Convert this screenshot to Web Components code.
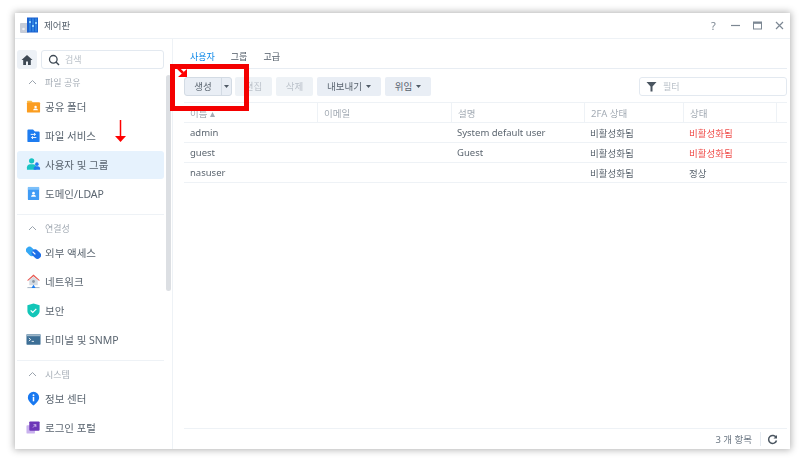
<!DOCTYPE html>
<html lang="ko">
<head>
<meta charset="utf-8">
<title>제어판</title>
<style>
  html, body { margin: 0; height: 100%; background: #fff; overflow: hidden; }
  body {
    font-family: "Noto Sans", "Noto Sans CJK KR", sans-serif;
    font-size: 10px;
    color: #4f5a66;
    padding: 13px 15px;
    box-sizing: border-box;
    width: 805px;
    height: 462px;
  }
</style>
</head>
<body>
<dsm-window>
  <dsm-sidebar slot="side">
    <side-group label="파일 공유">
      <side-item icon="folder">공유 폴더</side-item>
      <side-item icon="files">파일 서비스</side-item>
      <side-item icon="users" selected>사용자 및 그룹</side-item>
      <side-item icon="domain">도메인/LDAP</side-item>
    </side-group>
    <side-group label="연결성">
      <side-item icon="link">외부 액세스</side-item>
      <side-item icon="net">네트워크</side-item>
      <side-item icon="shield">보안</side-item>
      <side-item icon="term">터미널 및 SNMP</side-item>
    </side-group>
    <side-group label="시스템" last>
      <side-item icon="info">정보 센터</side-item>
      <side-item icon="portal">로그인 포털</side-item>
    </side-group>
  </dsm-sidebar>
  <user-panel slot="main"></user-panel>
</dsm-window>
<mark-up></mark-up>

<script>
const ICONS = {
  folder: `<path d="M1 3c0-.8.5-1.200 1.200-1.200h3.600l1.600 1.800H1z" fill="#f7bd45"/><rect x="1" y="3.500" width="14" height="11" rx="1" fill="#fb9d1f"/><circle cx="10.200" cy="8.400" r="1.300" fill="#fff"/><path d="M7.600 12c.2-1.600 1.200-2 2.600-2s2.400.4 2.600 2z" fill="#fff"/>`,
  files: `<path d="M1.500 2.600c0-.7.4-1 1-1h5l2 2h4c.7 0 1 .4 1 1v9.400c0 .7-.4 1-1 1h-11c-.6 0-1-.3-1-1z" fill="#1e7cf0"/><path d="M5 6.800h5M8.600 5.400l1.500 1.400-1.500 1.400M11 10.200H6M7.400 8.800L5.900 10.200l1.500 1.400" fill="none" stroke="#fff" stroke-width="1"/>`,
  users: `<circle cx="6" cy="4" r="2.800" fill="#19c4c4"/><path d="M1 13.500V11c0-2 1.400-3.400 3.400-3.400h3.200c2 0 3.400 1.400 3.400 3.400v2.500z" fill="#19c4c4"/><circle cx="11.600" cy="7.600" r="1.900" fill="#1e7cf0"/><path d="M8.200 13.500v-1.300c0-1.400 1-2.400 2.400-2.400h2c1.400 0 2.400 1 2.400 2.400v1.300z" fill="#1e7cf0"/>`,
  domain: `<rect x="2" y="1" width="12" height="14" rx="1" fill="#3f9bf5"/><rect x="2" y="1" width="12" height="3" fill="#7cc0fa"/><circle cx="8" cy="7.600" r="1.400" fill="#fff"/><path d="M5.400 11.400c.2-1.600 1.200-2 2.600-2s2.400.4 2.600 2z" fill="#fff"/>`,
  link: `<rect x="-.5" y="3" width="11" height="7.500" rx="3.700" transform="rotate(45 5 6.700)" fill="#35a8f5"/><rect x="5.500" y="6" width="11" height="7.500" rx="3.700" transform="rotate(45 11 9.700)" fill="#1e6fe8"/><path d="M7 7l3 3" stroke="#fff" stroke-width="1.300"/>`,
  net: `<path d="M8 .5L1 7h1.600L8 2.300 13.400 7H15z" fill="#e8564f"/><path d="M3.500 6.500L8 2.800l4.500 3.700v5.500h-9z" fill="#d5dbe2"/><circle cx="8" cy="8" r="1.500" fill="#8c98a5"/><path d="M1.500 14.500h13" stroke="#9fb0c0" stroke-width="1"/><path d="M8 11.500l2.200 3.500H5.800z" fill="#1e7cf0"/>`,
  shield: `<path d="M8 .5l6.500 2v5.700c0 3.300-2.800 5.900-6.500 7.300-3.700-1.400-6.500-4-6.500-7.300V2.500z" fill="#12c6b8"/><path d="M5 7.800l2.200 2.200 3.800-3.800" fill="none" stroke="#fff" stroke-width="1.300"/>`,
  term: `<rect x="0.500" y="2.500" width="15" height="11" rx=".6" fill="#3d6f96"/><rect x="0.500" y="2.500" width="15" height="2" fill="#9db6c9"/><path d="M3 6.400l2 1.600-2 1.600M6 10h2.500" fill="none" stroke="#fff" stroke-width=".9"/>`,
  info: `<path d="M8 15.500C5 12.800 2 10.200 2 6.800a6 6 0 0 1 12 0c0 3.400-3 6-6 8.700z" fill="#1878f0"/><circle cx="8" cy="4.400" r="1" fill="#fff"/><rect x="7.200" y="6.200" width="1.600" height="4.800" fill="#fff"/>`,
  portal: `<rect x=".5" y="5.500" width="9" height="9" rx="1" fill="#c9b2ee"/><rect x="3.500" y="1.500" width="11" height="10" rx="1" fill="#6d35b8"/><path d="M7.500 8l3-3M8 5h2.500v2.500" fill="none" stroke="#e6d8f8" stroke-width=".8"/>`
};

class DsmWindow extends HTMLElement {
  constructor() {
    super();
    this.attachShadow({ mode: "open" });
    this.shadowRoot.innerHTML = `
    <style>
      :host {
        display: flex;
        flex-direction: column;
        width: 775px;
        height: 436px;
        background: #fff;
        box-shadow: 0 0 7px 1px #0000004d;
        filter: blur(.45px);
      }
      .title {
        display: flex;
        align-items: center;
        height: 25px;
        border-bottom: 1px solid #eef2f6;
        padding: 0 4px 0 5px;
        flex: none;
      }
      .title svg.logo { width: 18px; height: 17px; margin-right: 6px; }
      .title span { font-size: 9.5px; color: #5a6570; flex: 1; margin-top: -1px; }
      .ctl { display: flex; gap: 9px; }
      .ctl svg { width: 13px; height: 13px; display: block; }
      .body { display: flex; flex: 1; min-height: 0; }
      ::slotted([slot=side]) { width: 158px; flex: none; }
      ::slotted([slot=main]) { flex: 1; min-width: 0; }
    </style>
    <div class="title">
      <svg class="logo" viewBox="0 0 18 17">
        <rect x="0" y="6" width="9" height="10" rx="1" fill="#c6ccd8"/>
        <circle cx="3.500" cy="12" r="1.300" fill="#eef0f5"/>
        <rect x="7" y="0.500" width="11" height="15" fill="#1b61cf"/>
        <path d="M10 1.500v13M13 1.500v13M16 1.500v13" stroke="#3ea2f2" stroke-width="1"/>
        <rect x="9" y="4" width="2" height="2" fill="#8ed0fa"/><rect x="12" y="8" width="2" height="2" fill="#8ed0fa"/><rect x="15" y="5" width="2" height="2" fill="#8ed0fa"/>
      </svg>
      <span>제어판</span>
      <div class="ctl">
        <svg viewBox="0 0 13 13"><text x="6.500" y="10.500" text-anchor="middle" font-size="11" fill="#7c8793" font-family="Noto Sans">?</text></svg>
        <svg viewBox="0 0 13 13"><path d="M2 6.500h9" stroke="#7c8793" stroke-width="1.200"/></svg>
        <svg viewBox="0 0 13 13"><rect x="2.500" y="3" width="8" height="7" fill="none" stroke="#7c8793" stroke-width="1"/><rect x="2.500" y="3" width="8" height="1.800" fill="#7c8793"/></svg>
        <svg viewBox="0 0 13 13"><path d="M3 3l7 7M10 3l-7 7" stroke="#7c8793" stroke-width="1.200"/></svg>
      </div>
    </div>
    <div class="body">
      <slot name="side"></slot>
      <slot name="main"></slot>
    </div>`;
  }
}

class DsmSidebar extends HTMLElement {
  constructor() {
    super();
    this.attachShadow({ mode: "open" });
    this.shadowRoot.innerHTML = `
    <style>
      :host {
        display: block;
        position: relative;
        box-sizing: border-box;
        border-right: 1px solid #eef2f6;
        padding: 11px 8px 0 2px;
        overflow: hidden;
      }
      .top { display: flex; gap: 4px; height: 19px; margin-bottom: 3px; }
      .home {
        width: 20px; background: #edf1f6; border-radius: 3px;
        display: flex; align-items: center; justify-content: center;
      }
      .search {
        flex: 1; border: 1px solid #e3e9f0; border-radius: 3px; box-sizing: border-box;
        display: flex; align-items: center; padding-left: 6px; gap: 5px;
        color: #b9c0c8; font-size: 9px;
      }
      .bar {
        position: absolute; right: 1px; top: 36px; width: 5px; height: 216px;
        background: #dcdfe3; border-radius: 3px;
      }
    </style>
    <div class="top">
      <div class="home"><svg width="12" height="12" viewBox="0 0 12 12"><path d="M6 1L.5 6h1.700v5h2.800V7.500h2V11h2.800V6h1.700z" fill="#3d4853"/></svg></div>
      <div class="search">
        <svg width="12" height="12" viewBox="0 0 12 12"><circle cx="5.300" cy="5.300" r="3.800" fill="none" stroke="#3d4853" stroke-width="1.300"/><path d="M8 8l3 3" stroke="#3d4853" stroke-width="1.400"/></svg>
        검색
      </div>
    </div>
    <slot></slot>
    <div class="bar"></div>`;
  }
}

class SideGroup extends HTMLElement {
  constructor() {
    super();
    this.attachShadow({ mode: "open" });
  }
  connectedCallback() {
    this.shadowRoot.innerHTML = `
    <style>
      :host {
        display: flex;
        flex-direction: column;
        gap: 1px;
        padding-bottom: 6px;
        margin-bottom: 3px;
        border-bottom: 1px solid #eef2f6;
      }
      :host([last]) { border-bottom: 0; }
      .head {
        display: flex; align-items: center; height: 20px;
        padding-left: 11px; gap: 8px;
        color: #a3abb4; font-size: 9px;
      }
    </style>
    <div class="head">
      <svg width="9" height="6" viewBox="0 0 9 6"><path d="M1 5l3.500-3.500L8 5" fill="none" stroke="#9aa3ad" stroke-width="1"/></svg>
      <span>${this.getAttribute("label")}</span>
    </div>
    <slot></slot>`;
  }
}

class SideItem extends HTMLElement {
  constructor() {
    super();
    this.attachShadow({ mode: "open" });
  }
  connectedCallback() {
    this.shadowRoot.innerHTML = `
    <style>
      :host {
        display: flex; align-items: center; height: 28px;
        box-sizing: border-box; padding: 0 0 2px 9px; gap: 4px; border-radius: 3px;
        font-size: 10.500px; color: #5a6570;
      }
      :host([selected]) { background: #e6f2fd; }
      svg { width: 15px; height: 15px; flex: none; }
    </style>
    <svg viewBox="0 0 16 16">${ICONS[this.getAttribute("icon")]}</svg>
    <slot></slot>`;
  }
}

class ToolButton extends HTMLElement {
  constructor() {
    super();
    this.attachShadow({ mode: "open" });
  }
  connectedCallback() {
    const caret = this.hasAttribute("caret")
      ? `<svg width="5" height="3" viewBox="0 0 5 3"><path d="M0 0h5L2.500 3z" fill="#4f5a66"/></svg>` : "";
    this.shadowRoot.innerHTML = `
    <style>
      :host {
        display: inline-flex; align-items: center; justify-content: center; gap: 4px;
        box-sizing: border-box; height: 19px;
        background: #e9eef5; border-radius: 2px;
        font-size: 9.500px; color: #5a6570;
      }
      :host([disabled]) { background: #eef2f6; color: #bcc3cb; }
    </style>
    <slot></slot>${caret}`;
  }
}

class SplitButton extends HTMLElement {
  constructor() {
    super();
    this.attachShadow({ mode: "open" });
    this.shadowRoot.innerHTML = `
    <style>
      :host {
        display: flex; box-sizing: border-box; height: 19px; width: 48px;
        background: #e9eef5; border: 1px solid #d3dbe4; border-radius: 3px;
        font-size: 9.500px; color: #5a6570;
      }
      .a { width: 36px; display: flex; align-items: center; justify-content: center; border-right: 1px solid #d3dbe4; }
      .b { flex: 1; display: flex; align-items: center; justify-content: center; }
    </style>
    <div class="a"><slot></slot></div>
    <div class="b"><svg width="5" height="3" viewBox="0 0 5 3"><path d="M0 0h5L2.500 3z" fill="#4f5a66"/></svg></div>`;
  }
}

class UserPanel extends HTMLElement {
  constructor() {
    super();
    this.attachShadow({ mode: "open" });
    const rows = [
      ["admin", "", "System default user", "비활성화됨", "비활성화됨", true],
      ["guest", "", "Guest", "비활성화됨", "비활성화됨", true],
      ["nasuser", "", "", "비활성화됨", "정상", false],
    ];
    const rowHtml = rows.map(r => `
      <div class="row">
        <div>${r[0]}</div><div>${r[1]}</div><div>${r[2]}</div><div>${r[3]}</div>
        <div class="${r[5] ? "red" : ""}">${r[4]}</div><div></div>
      </div>`).join("");
    this.shadowRoot.innerHTML = `
    <style>
      :host {
        display: flex; flex-direction: column;
        padding: 0 3px 0 11px;
        min-height: 0;
      }
      .tabs {
        display: flex; gap: 16px; height: 30px; align-items: center;
        padding: 6px 0 0 6px; box-sizing: border-box;
        border-bottom: 1px solid #e8edf3;
        font-size: 9px; color: #4f5a66; flex: none;
      }
      .tabs .on { color: #0a86e8; }
      .tools { display: flex; align-items: center; gap: 4px; height: 33px; flex: none; padding-top: 1px; box-sizing: border-box; }
      .filter {
        margin-left: auto; width: 148px; height: 19px; box-sizing: border-box;
        border: 1px solid #e3e9f0; border-radius: 3px;
        display: flex; align-items: center; gap: 6px; padding-left: 6px;
        color: #b9c0c8; font-size: 9px;
      }
      .table { flex: 1; min-height: 0; }
      .row, .head {
        display: grid;
        grid-template-columns: 133px 134px 133px 99px 93px 11px;
        height: 20px; align-items: center;
        border-bottom: 1px solid #eef2f6;
        box-sizing: border-box;
      }
      .head { border-top: 1px solid #eef2f6; color: #a3abb4; font-size: 9.500px; height: 21px; }
      .row > div, .head > div { padding-left: 6px; white-space: nowrap; height: 100%; display: flex; align-items: center; box-sizing: border-box; }
      .head > div + div { border-left: 1px solid #eef2f6; }
      .row { font-size: 9.500px; color: #5c6670; }
      .red { color: #f0504d; }
      .foot {
        flex: none; height: 20px; border-top: 1px solid #eef2f6;
        display: flex; justify-content: flex-end; align-items: center;
        color: #6d7884; font-size: 9.500px;
      }
      .foot span { padding-right: 8px; }
      .foot i { display: block; width: 1px; height: 14px; background: #e6ebf1; margin-right: 6px; }
      .foot svg { margin-right: 9px; }
    </style>
    <div class="tabs"><span class="on">사용자</span><span>그룹</span><span>고급</span></div>
    <div class="tools">
      <split-button>생성</split-button>
      <tool-button disabled style="width:37px;margin-left:-1px">편집</tool-button>
      <tool-button disabled style="width:37px">삭제</tool-button>
      <tool-button caret style="width:64px">내보내기</tool-button>
      <tool-button caret style="width:46px">위임</tool-button>
      <div class="filter">
        <svg width="11" height="11" viewBox="0 0 11 11"><path d="M.5 1h10L6.500 5.500V10.500h-2V5.500z" fill="#4a5560"/></svg>
        필터
      </div>
    </div>
    <div class="table">
      <div class="head"><div>이름 ▴</div><div>이메일</div><div>설명</div><div>2FA 상태</div><div>상태</div><div></div></div>
      ${rowHtml}
    </div>
    <div class="foot">
      <span>3 개 항목</span><i></i>
      <svg width="11" height="11" viewBox="0 0 11 11"><path d="M9.200 3.600A4 4 0 1 0 9.500 6.500" fill="none" stroke="#4a5560" stroke-width="1.500"/><path d="M10 1v3.500H6.500z" fill="#4a5560"/></svg>
    </div>`;
  }
}

// red annotations drawn over the screenshot
class MarkUp extends HTMLElement {
  constructor() {
    super();
    this.attachShadow({ mode: "open" });
    this.shadowRoot.innerHTML = `
    <style>
      :host { position: absolute; left: 0; top: 0; width: 805px; height: 462px; pointer-events: none; filter: blur(.35px); }
      .box { position: absolute; left: 170px; top: 64px; width: 79px; height: 47px; border: 5px solid #f40000; box-sizing: border-box; }
      svg { position: absolute; left: 0; top: 0; }
    </style>
    <div class="box"></div>
    <svg width="805" height="462">
      <path d="M120.500 120v17" stroke="#f00" stroke-width="1.500"/>
      <path d="M115 136h11l-5.500 6z" fill="#f00"/>
      <path d="M177 67l6 6" stroke="#f00" stroke-width="2.500"/>
      <path d="M187 69v8h-9z" fill="#f00"/>
    </svg>`;
  }
}

customElements.define("dsm-window", DsmWindow);
customElements.define("dsm-sidebar", DsmSidebar);
customElements.define("side-group", SideGroup);
customElements.define("side-item", SideItem);
customElements.define("tool-button", ToolButton);
customElements.define("split-button", SplitButton);
customElements.define("user-panel", UserPanel);
customElements.define("mark-up", MarkUp);
</script>
</body>
</html>
